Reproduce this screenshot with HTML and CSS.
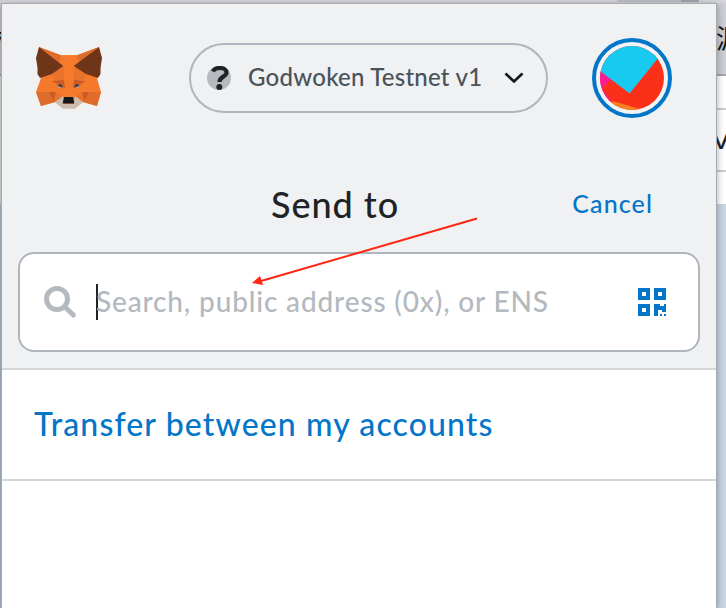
FILE: index.html
```
<!DOCTYPE html>
<html lang="en">
<head>
<meta charset="utf-8">
<title>Send to</title>
<link rel="stylesheet" href="styles.css">
</head>
<body>
<div class="topstrip"><i class="tab"></i><i class="tab-dot"></i></div>
<div class="screen">
  <aside class="backdrop backdrop-left">
    <div class="toolbar"><span class="cjk">档</span></div>
    <div class="rows"></div>
    <div class="canvas"></div>
  </aside>
  <main class="popup">
    <header class="app-header">
      <svg class="fox" viewBox="36 47 66 62">
        <path fill="#f5792a" d="M39 47L61 55.300H77L99 47 101 62 97 78 101 92 97 106 83 102 75 108H63L55 102 41 106 36 92 41 78 37 62Z"/>
        <path fill="#e06c2b" d="M36 92H53L55 102 41 106ZM101 92H85L83 102 97 106ZM39 47L61 55.300 59 62ZM99 47L77 55.300 79 62Z"/>
        <path fill="#e8732c" d="M64 66L52 74 54 80 64 80ZM74 66L86 74 84 80 74 80Z"/>
        <path fill="#f67a2b" d="M61 55.300H77L74 67 73.500 97H64.500L64 67Z"/>
        <path fill="#6f3519" d="M39 47L63.300 66 52 74 40 78 37.500 74 37.500 68 36 58ZM99 47L73.700 66 86 74 98 78 100.500 74 100.500 68 102 58Z"/>
        <path fill="#c95b29" d="M52 81L64 80 65 88 57 84ZM86 81L74 80 73 88 81 84ZM49 92H56L54 101ZM89 92H82L84 101Z"/>
        <path fill="#e8722c" d="M56 92L64 97 63 102 55 101ZM82 92L74 97 75 102 83 101Z"/>
        <path fill="#cdbcae" d="M55 102L63 96 65 104H73L75 96 83 102 75 108.700H63Z"/>
        <path fill="#263b50" d="M57 85.500L61 84 63 88ZM80 85.500L76 84 74 88Z"/>
        <path fill="#b7a398" d="M57 85.500L63 88 59 87.500ZM80 85.500L74 88 78 87.500Z"/>
        <path fill="#151719" d="M64 97H73L74.300 103.500H62.700Z"/>
      </svg>
      <div class="network">
        <svg class="question" viewBox="0 0 24 24">
          <circle cx="12" cy="12" r="12" fill="#b5babf"/>
          <path d="M6 5.500C8 .8 19.500.5 19.500 6.500c0 4.800-7 3.400-7 9.500" fill="none" stroke="#202326" stroke-width="4.200"/>
          <circle cx="12.300" cy="21" r="3" fill="#202326"/>
        </svg>
        <span class="network-name">Godwoken Testnet v1</span>
        <svg class="chevron" viewBox="0 0 20 12"><path d="M1.500 1.500L10 9.500 18.500 1.500" fill="none" stroke="#15181a" stroke-width="2.700"/></svg>
      </div>
      <svg class="avatar" viewBox="0 0 80 80">
        <defs><clipPath id="disc"><circle cx="40" cy="40" r="32"/></clipPath></defs>
        <circle cx="40" cy="40" r="38" fill="#f2f3f4" stroke="#0376c9" stroke-width="4"/>
        <g clip-path="url(#disc)">
          <path fill="#fb3018" d="M0 0H80V80H0Z"/>
          <path fill="#f98020" d="M17 62L58 74 30 80Z"/>
          <path fill="#fa1c96" d="M0 30L8 33 20 41 10 50 20 64 0 60Z"/>
          <path fill="#fb3018" d="M20 41L10 50 20 64 30 60Z"/>
          <path fill="#18caf0" d="M0 26L8 33 37.500 55.500 67 19 60 0H0Z"/>
        </g>
      </svg>
    </header>
    <section class="send-head">
      <h1 class="title">Send to</h1>
      <a class="cancel">Cancel</a>
    </section>
    <div class="search-wrap">
      <div class="search">
        <svg class="magnifier" viewBox="0 0 32 32"><circle cx="13" cy="13" r="10.500" fill="none" stroke="#b3b9bf" stroke-width="5"/><path d="M21 21L29.300 29" stroke="#b3b9bf" stroke-width="5" stroke-linecap="round"/></svg>
        <i class="caret"></i>
        <span class="placeholder">Search, public address (0x), or ENS</span>
        <svg class="qr" viewBox="0 0 28 28" shape-rendering="crispEdges"><path fill="#0376c9" fill-rule="evenodd" d="M0 0H12V12H0ZM4 4V8H8V4ZM16 0H28V12H16ZM20 4V8H24V4ZM0 16H12V28H0ZM4 20V24H8V20ZM16 16H22V18H26V16H28V24H24V22H20V28H16ZM22 26H24V28H22ZM26 26H28V28H26Z"/></svg>
      </div>
    </div>
    <div class="transfer"><span class="transfer-text">Transfer between my accounts</span></div>
  </main>
  <aside class="backdrop backdrop-right">
    <div class="toolbar"><span class="cjk">源</span></div>
    <div class="rows"><div class="field"><span class="vee">V</span></div></div>
    <div class="canvas"></div>
  </aside>
</div>
<svg class="arrow" viewBox="0 0 726 608"><path d="M477 218.500L261 281" stroke="#ff2613" stroke-width="2"/><path d="M252 283L260 276 263 285Z" fill="#ff2613"/></svg>
</body>
</html>
```
FILE: styles.css
```
* { box-sizing: border-box; }
body { margin: 0; width: 726px; height: 608px; overflow: hidden; background: #fff; font-family: Lato, "Liberation Sans", sans-serif; font-weight: 500; position: relative; }
svg { display: block; flex: none; }
.topstrip { height: 3px; background: #d4d4da; display: flex; justify-content: flex-end; overflow: hidden; }
.tab { width: 64px; height: 2px; background: #bbbbc2; border-radius: 8px 0 0 0; }
.tab-dot { width: 18px; height: 2px; margin-right: 27px; background: #a2a2a9; }
.screen { display: grid; grid-template-columns: 1px 716px 9px; height: 605px; }
.backdrop { overflow: hidden; }
.toolbar { height: 73px; background: #cdcdd4; border-bottom: 2px solid #a6a6ac; overflow: hidden; }
.cjk { display: block; margin: 18px 0 0 -1px; font: 27px/34px "Noto Sans CJK SC", sans-serif; color: #15171a; }
.backdrop-left .cjk { margin-left: -8px; }
.rows { height: 128px; padding-top: 32px; background: #fff; }
.backdrop-left .rows { background: #dedfe0; }
.field { height: 64px; border-top: 2px solid #ccc; border-bottom: 2px solid #ccc; overflow: hidden; }
.vee { display: block; margin: 12px 0 0 -6px; font: 30px/34px "Liberation Sans", sans-serif; color: #222; }
.canvas { height: 404px; background: #c8d6e3; }
.backdrop-left .canvas { background: #b3c2cf; }
.popup { border: 1px solid #a5aab1; border-bottom: 0; background: #fff; box-shadow: 0 2px 7px rgba(0,0,0,.35); position: relative; }
.app-header { height: 152px; padding: 34px 44px 0 34px; background: #f0f1f3; display: flex; align-items: flex-start; justify-content: space-between; }
.fox { width: 66px; height: 62px; margin-top: 9px; }
.network { width: 359px; height: 70px; margin: 5px 0 0 43px; padding: 0 22px 0 16px; border: 2px solid #afb5bc; border-radius: 35px; display: flex; align-items: center; color: #4b535a; }
.question { width: 24px; height: 24px; }
.network-name { width: 236px; margin: -3px 0 0 17px; font-size: 24px; letter-spacing: .24px; white-space: nowrap; }
.chevron { width: 20px; height: 12px; margin-left: 20px; }
.avatar { width: 80px; height: 80px; }
.send-head { height: 96px; padding: 0 64px 0 269px; background: #f0f1f3; display: flex; justify-content: space-between; align-items: flex-start; }
.title { margin: 26px 0 0; font-size: 36px; line-height: 44px; font-weight: 500; letter-spacing: .95px; color: #202326; white-space: nowrap; }
.cancel { margin-top: 32px; font-size: 25px; line-height: 30px; color: #0376c9; letter-spacing: 1.1px; margin-right: -1px; white-space: nowrap; }
.search-wrap { height: 118px; padding: 0 16px; background: #f0f1f3; border-bottom: 2px solid #d2d6d9; }
.search { height: 100px; border: 2px solid #b0b5bd; border-radius: 16px; background: #fff; display: flex; align-items: center; padding: 0 32px 0 24px; }
.magnifier { width: 32px; height: 32px; }
.caret { width: 2px; height: 36px; margin-left: 20px; background: #202326; }
.placeholder { font-size: 28px; line-height: 36px; margin: -2px 0 0 -2px; letter-spacing: .85px; color: #b3b9bf; white-space: nowrap; }
.qr { width: 28px; height: 28px; margin-left: auto; }
.transfer { height: 111px; padding: 0 32px; border-bottom: 2px solid #d2d6d9; display: flex; align-items: center; color: #0376c9; }
.transfer-text { margin-top: -2px; font-size: 32px; line-height: 40px; letter-spacing: 1.12px; white-space: nowrap; }
.arrow { position: absolute; left: 0; top: 0; width: 726px; height: 608px; }
```
